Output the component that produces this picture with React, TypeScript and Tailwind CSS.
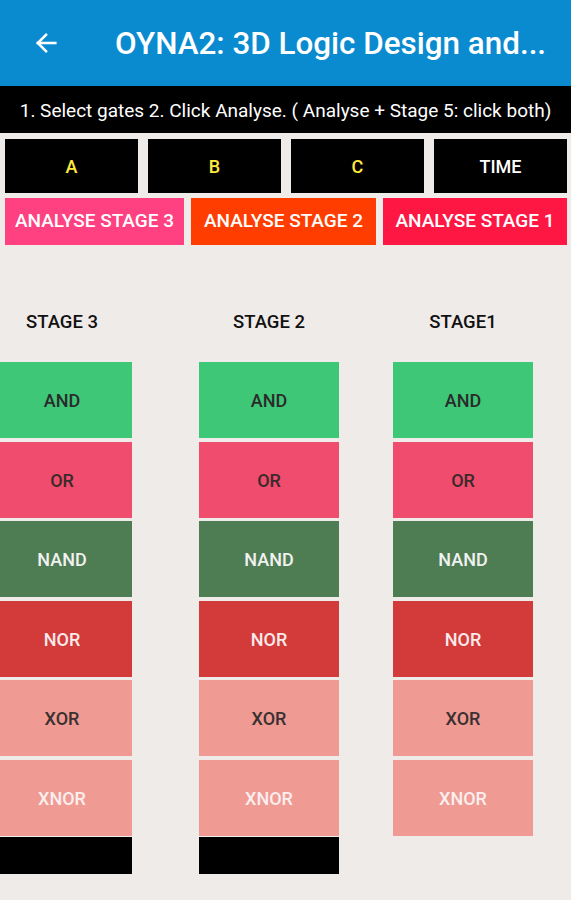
import React from "react";

const gates = [
  { name: "AND", bg: "bg-[#3ec777]", text: "text-[#2b2b2b]" },
  { name: "OR", bg: "bg-[#ef4c6e]", text: "text-[#3a2a2a]" },
  { name: "NAND", bg: "bg-[#4f7d53]", text: "text-[#f1f1f1]" },
  { name: "NOR", bg: "bg-[#d23b3a]", text: "text-[#fbeaea]" },
  { name: "XOR", bg: "bg-[#ef9b94]", text: "text-[#3a3030]" },
  { name: "XNOR", bg: "bg-[#ef9b94]", text: "text-[#fbeeee]" },
];

function Column({ title, black, extra }: { title: string; black: boolean; extra: string }) {
  return (
    <div className={`flex w-[140px] shrink-0 flex-col items-stretch ${extra}`}>
      <div className="flex h-[20px] items-center justify-center text-[18.5px] font-medium text-[#111]">{title}</div>
      <div className="mt-[29px] flex flex-col gap-[3.6px]">
        {gates.map((g) => (
          <div
            key={g.name}
            className={`flex h-[76px] items-center justify-center pt-[1px] text-[18px] font-medium ${g.bg} ${g.text}`}
          >
            {g.name}
          </div>
        ))}
      </div>
      {black && <div className="mt-[1.5px] h-[37px] bg-black" />}
    </div>
  );
}

export default function App() {
  return (
    <div className="h-[900px] w-[571px] overflow-hidden bg-[#efebe9]" style={{ fontFamily: "Roboto, 'Noto Sans', sans-serif" }}>
      <div className="flex h-[86px] items-center bg-[#0a8bd0] text-white">
        <svg className="ml-[32px] shrink-0" width="28" height="28" viewBox="0 0 24 24" fill="none" stroke="white" strokeWidth="2.2" strokeLinecap="square">
          <path d="M20 12H5" />
          <path d="M12 5l-7 7 7 7" />
        </svg>
        <div className="ml-[55px] mt-[2px] whitespace-nowrap text-[31.4px] font-medium leading-none">OYNA2: 3D Logic Design and...</div>
      </div>
      <div className="flex h-[47px] items-center justify-center bg-black pt-[3px] text-[19px] text-white">
        1. Select gates 2. Click Analyse. ( Analyse + Stage 5: click both)
      </div>
      <div className="mt-[6px] flex gap-[10px] pl-[5px] pr-[4px]">
        {["A", "B", "C", "TIME"].map((l) => (
          <div
            key={l}
            className={`flex h-[54px] flex-1 items-center justify-center bg-black text-[18px] font-medium ${l === "TIME" ? "text-white" : "text-[#ffeb3b]"}`}
          >
            {l}
          </div>
        ))}
      </div>
      <div className="mt-[5px] flex gap-[7px] pl-[5px] pr-[4px]">
        <div className="flex h-[47px] w-[179px] items-center justify-center bg-[#ff4081] text-[19px] font-medium text-white">ANALYSE STAGE 3</div>
        <div className="flex h-[47px] w-[185px] items-center justify-center bg-[#ff3d00] text-[19px] font-medium text-white">ANALYSE STAGE 2</div>
        <div className="flex h-[47px] flex-1 items-center justify-center bg-[#ff1744] text-[19px] font-medium text-white">ANALYSE STAGE 1</div>
      </div>
      <div className="mt-[68px] flex">
        <Column title="STAGE 3" black={true} extra="ml-[-8px]" />
        <Column title="STAGE 2" black={true} extra="ml-[67px]" />
        <Column title="STAGE1" black={false} extra="ml-[54px]" />
      </div>
    </div>
  );
}
